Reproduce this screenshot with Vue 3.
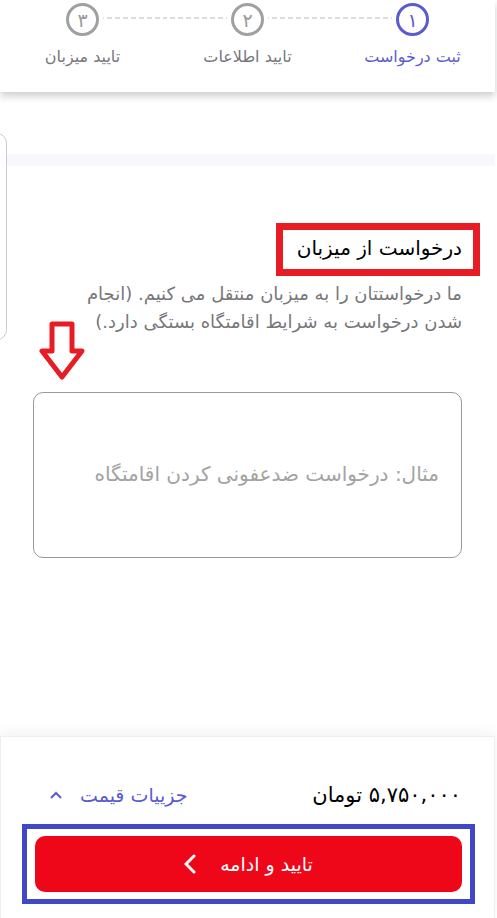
<script setup>
import { computed, ref } from "vue";

const steps = [
  { id: 1, num: "۱", title: "ثبت درخواست" },
  { id: 2, num: "۲", title: "تایید اطلاعات" },
  { id: 3, num: "۳", title: "تایید میزبان" },
];
const current = ref(1);
const request = ref("");
const price = ref(5750000);

const priceFormat = computed(() =>
  price.value
    .toString()
    .replace(/\B(?=(\d{3})+$)/g, ",")
    .replace(/\d/g, (d) => "۰۱۲۳۴۵۶۷۸۹"[d])
);
</script>

<template>
  <div class="page" dir="rtl" lang="fa">
    <header class="header">
      <ol class="steps">
        <li
          v-for="step in steps"
          :key="step.id"
          class="step"
          :class="{ active: step.id === current }"
        >
          <div class="track">
            <span class="num">{{ step.num }}</span>
          </div>
          <span class="step-title">{{ step.title }}</span>
        </li>
      </ol>
    </header>

    <main class="main">
      <div class="side-card"></div>
      <div class="divider"></div>
      <section class="request">
        <h2 class="title"><label for="request">درخواست از میزبان</label></h2>
        <p class="desc">
          ما درخواستتان را به میزبان منتقل می کنیم. (انجام شدن درخواست به شرایط
          اقامتگاه بستگی دارد.)
        </p>
        <div class="field">
          <svg class="arrow" viewBox="0 0 46 60" width="46" height="60">
            <path
              d="M13 3H33V30H43L23 56L3 30H13Z"
              fill="#fff"
              stroke="#e81c24"
              stroke-width="5"
              stroke-linejoin="round"
            />
          </svg>
          <textarea
            id="request"
            v-model="request"
            class="input"
            placeholder="مثال: درخواست ضدعفونی کردن اقامتگاه"
          ></textarea>
        </div>
      </section>
    </main>

    <footer class="footer">
      <div class="price-row">
        <span class="price">{{ priceFormat }} تومان</span>
        <button type="button" class="detail">
          جزییات قیمت
          <svg viewBox="0 0 12 8" width="12" height="8">
            <path d="M1 7L6 2L11 7" fill="none" stroke="currentColor" stroke-width="2" />
          </svg>
        </button>
      </div>
      <div class="submit-box">
        <button type="button" class="submit">
          تایید و ادامه
          <svg viewBox="0 0 12 20" width="12" height="20">
            <path
              d="M10 2L2 10L10 18"
              fill="none"
              stroke="currentColor"
              stroke-width="3"
              stroke-linecap="round"
            />
          </svg>
        </button>
      </div>
    </footer>
  </div>
</template>

<style>
body {
  background: #fff;
}
</style>

<style scoped>
.page {
  display: flex;
  flex-direction: column;
  min-height: 100vh;
  box-sizing: border-box;
  padding-right: 2px;
  overflow: hidden;
  font-family: "DejaVu Sans", sans-serif;
  color: #111;
}
.header {
  position: relative;
  z-index: 1;
  height: 92px;
  background: #fff;
  box-shadow: 0 4px 8px rgba(0, 0, 0, 0.2);
}
.steps {
  display: grid;
  grid-template-columns: repeat(3, 1fr);
  margin: 0;
  padding: 3px 0 0;
  list-style: none;
}
.step {
  text-align: center;
  color: #77777d;
}
.track {
  display: flex;
  align-items: center;
  gap: 4px;
}
/* half of the dashed line on each side of the number */
.track::before,
.track::after {
  content: "";
  flex: 1;
  height: 2px;
  margin-bottom: 4px;
}
.track::before {
  background: repeating-linear-gradient(to left, #ddd 0 2px, transparent 2px 5px, #ddd 5px 8px);
}
.track::after {
  background: repeating-linear-gradient(to right, #ddd 0 2px, transparent 2px 5px, #ddd 5px 8px);
}
/* the gradients start at the column edge so both halves meet in one dash */
.step:first-child .track::before,
.step:last-child .track::after {
  background: none;
}
.num {
  width: 33px;
  height: 33px;
  box-sizing: border-box;
  border: 3px solid #a0a0a0;
  border-radius: 50%;
  font-size: 19px;
  line-height: 28px;
  color: #999;
}
.step-title {
  display: block;
  margin-top: 9px;
  font-size: 16px;
  line-height: 24px;
  white-space: nowrap;
}
.active,
.active .num {
  color: #5b5bd0;
}
.active .num {
  border-color: #5b5bd0;
}
.main {
  position: relative;
  flex: 1;
  padding-top: 62px;
}
.side-card {
  position: absolute;
  top: 41px;
  left: -21px;
  width: 26px;
  height: 205px;
  border: 1px solid #ccc;
  border-radius: 10px;
  background: #fff;
}
.divider {
  height: 12px;
  background: #f7f7fe;
}
.request {
  padding: 57px 33px 40px;
}
.title {
  width: fit-content;
  margin: 0 -18px 0 0;
  padding: 3px 11px 5px 14px;
  border: 7px solid #e81c24;
  font-size: 20px;
  font-weight: 400;
  line-height: 31px;
  color: #000;
}
.desc {
  margin: 4px 0 0;
  padding-left: 24px;
  font-size: 18px;
  line-height: 28px;
  color: #77777b;
}
.field {
  position: relative;
  margin-top: 56px;
}
.arrow {
  position: absolute;
  top: -71px;
  left: 6px;
}
.input {
  display: block;
  width: 100%;
  height: 166px;
  box-sizing: border-box;
  padding: 66px 22px 20px;
  border: 1px solid #999;
  border-radius: 10px;
  outline: none;
  resize: none;
  background: transparent;
  font-family: inherit;
  font-size: 20px;
  line-height: 30px;
}
.input::placeholder {
  color: #a3a3a3;
  opacity: 1;
}
.footer {
  padding: 42px 19px 14px 21px;
  border: 1px solid #eee;
  border-bottom: 0;
  background: #fff;
  box-shadow: 0 -4px 12px rgba(0, 0, 0, 0.05);
}
.price-row {
  display: flex;
  align-items: center;
  justify-content: space-between;
  height: 32px;
  margin-bottom: 13px;
  padding: 0 14px 0 28px;
}
.price {
  font-size: 21px;
  color: #000;
}
.detail {
  display: flex;
  align-items: center;
  gap: 18px;
  padding: 0;
  border: 0;
  background: none;
  font-family: inherit;
  font-size: 19px;
  color: #5b5bd0;
  cursor: pointer;
}
.submit-box {
  padding: 7px 8px;
  border: 5px solid #4048c8;
}
.submit {
  display: flex;
  align-items: center;
  justify-content: center;
  gap: 24px;
  width: 100%;
  height: 56px;
  padding: 0;
  border: 0;
  border-radius: 10px;
  background: #ee0719;
  font-family: inherit;
  font-size: 19px;
  color: #fff;
  cursor: pointer;
}
</style>
